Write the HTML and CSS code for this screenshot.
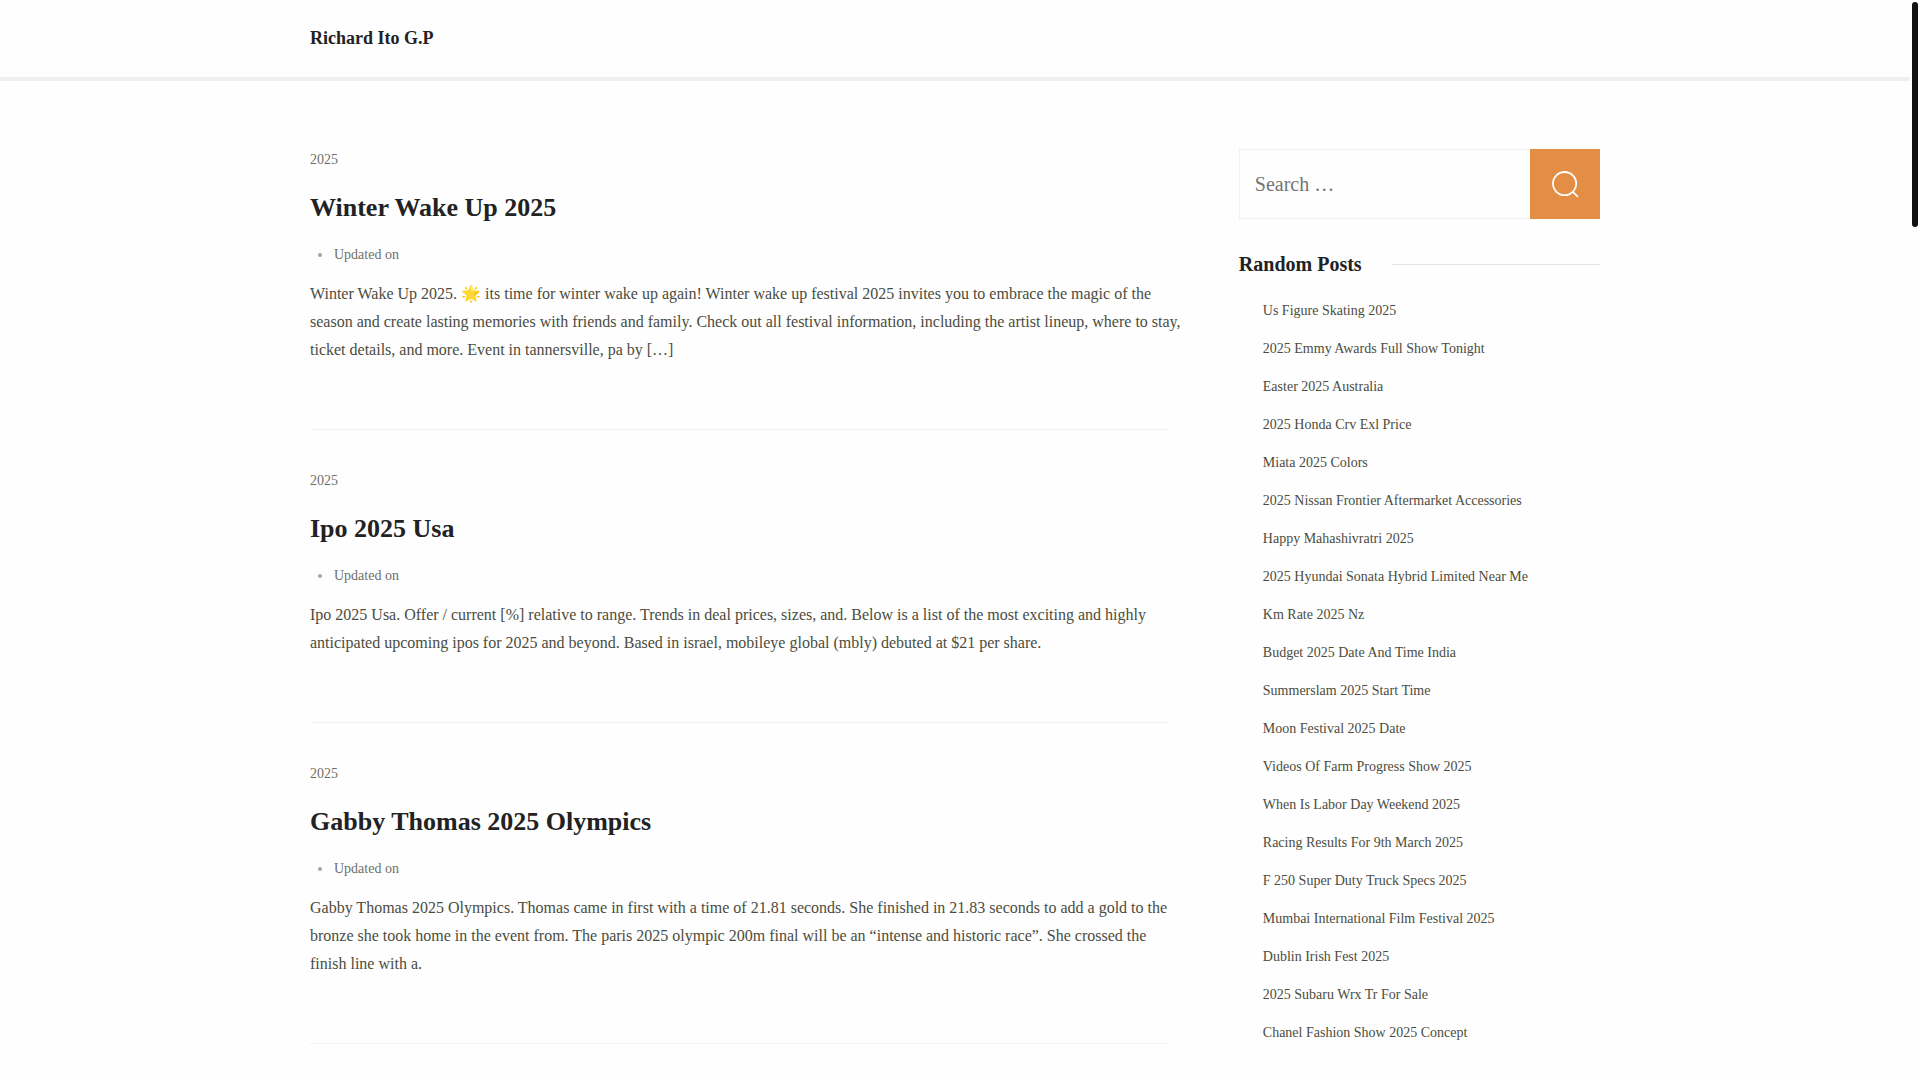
FILE: index.html
```html
<!DOCTYPE html>
<html lang="en">
<head>
<meta charset="utf-8">
<meta name="viewport" content="width=device-width, initial-scale=1">
<title>Richard Ito G.P</title>
<link rel="stylesheet" href="styles.css">
</head>
<body>
<header class="site-header">
  <div class="container">
    <a class="site-title" href="#">Richard Ito G.P</a>
  </div>
</header>
<div class="container content">
  <main class="posts">
    <article class="post">
      <a class="category" href="#">2025</a>
      <h2 class="post-title"><a href="#">Winter Wake Up 2025</a></h2>
      <ul class="meta"><li>Updated on</li></ul>
      <p class="excerpt">Winter Wake Up 2025. 🌟 its time for winter wake up again! Winter wake up festival 2025 invites you to embrace the magic of the season and create lasting memories with friends and family. Check out all festival information, including the artist lineup, where to stay, ticket details, and more. Event in tannersville, pa by […]</p>
    </article>
    <article class="post">
      <a class="category" href="#">2025</a>
      <h2 class="post-title"><a href="#">Ipo 2025 Usa</a></h2>
      <ul class="meta"><li>Updated on</li></ul>
      <p class="excerpt">Ipo 2025 Usa. Offer / current [%] relative to range. Trends in deal prices, sizes, and. Below is a list of the most exciting and highly anticipated upcoming ipos for 2025 and beyond. Based in israel, mobileye global (mbly) debuted at $21 per share.</p>
    </article>
    <article class="post">
      <a class="category" href="#">2025</a>
      <h2 class="post-title"><a href="#">Gabby Thomas 2025 Olympics</a></h2>
      <ul class="meta"><li>Updated on</li></ul>
      <p class="excerpt">Gabby Thomas 2025 Olympics. Thomas came in first with a time of 21.81 seconds. She finished in 21.83 seconds to add a gold to the bronze she took home in the event from. The paris 2025 olympic 200m final will be an “intense and historic race”. She crossed the finish line with a.</p>
    </article>
  </main>
  <aside class="sidebar">
    <form class="search" role="search">
      <input class="search-field" type="search" placeholder="Search …" aria-label="Search for">
      <button class="search-submit" type="submit" aria-label="Search">
        <svg class="search-icon" viewBox="0 0 28 28" aria-hidden="true"><circle cx="13.6" cy="13.6" r="11.6"/><path d="M21.4 21.4l5.4 5.4"/></svg>
      </button>
    </form>
    <section>
      <h2 class="widget-title">Random Posts</h2>
      <ul class="post-list">
        <li><a href="#">Us Figure Skating 2025</a></li>
        <li><a href="#">2025 Emmy Awards Full Show Tonight</a></li>
        <li><a href="#">Easter 2025 Australia</a></li>
        <li><a href="#">2025 Honda Crv Exl Price</a></li>
        <li><a href="#">Miata 2025 Colors</a></li>
        <li><a href="#">2025 Nissan Frontier Aftermarket Accessories</a></li>
        <li><a href="#">Happy Mahashivratri 2025</a></li>
        <li><a href="#">2025 Hyundai Sonata Hybrid Limited Near Me</a></li>
        <li><a href="#">Km Rate 2025 Nz</a></li>
        <li><a href="#">Budget 2025 Date And Time India</a></li>
        <li><a href="#">Summerslam 2025 Start Time</a></li>
        <li><a href="#">Moon Festival 2025 Date</a></li>
        <li><a href="#">Videos Of Farm Progress Show 2025</a></li>
        <li><a href="#">When Is Labor Day Weekend 2025</a></li>
        <li><a href="#">Racing Results For 9th March 2025</a></li>
        <li><a href="#">F 250 Super Duty Truck Specs 2025</a></li>
        <li><a href="#">Mumbai International Film Festival 2025</a></li>
        <li><a href="#">Dublin Irish Fest 2025</a></li>
        <li><a href="#">2025 Subaru Wrx Tr For Sale</a></li>
        <li><a href="#">Chanel Fashion Show 2025 Concept</a></li>
      </ul>
    </section>
  </aside>
</div>
<div class="scroll-thumb" aria-hidden="true"></div>
</body>
</html>
```
FILE: styles.css
```css
* { box-sizing: border-box; }

body {
  margin: 0;
  padding-right: 10px;
  background: #fefefe;
  color: #4b4c40;
  font-family: "Liberation Serif", "Times New Roman", serif;
  font-size: 16px;
  line-height: 28px;
}

a { color: inherit; text-decoration: none; }
h2, p, ul { margin: 0; padding: 0; }
ul { list-style: none; }

.container {
  width: 100%;
  max-width: 1290px;
  margin: 0 auto;
}

.site-header {
  padding: 24px 0 25px;
  border-bottom: 4px solid #f0f0f0;
}
.site-title {
  display: block;
  color: #222;
  font-size: 18px;
  font-weight: 700;
}

.content {
  display: grid;
  grid-template-columns: minmax(0, 1fr) 28%;
  column-gap: 70px;
  padding-top: 68px;
}

.post {
  padding-bottom: 65px;
  border-bottom: 1px solid #f2f2f2;
}
.post + .post { margin-top: 40px; }

.category {
  display: block;
  color: #6f7067;
  font-size: 14px;
  line-height: 22px;
}
.post-title {
  margin-top: 19px;
  color: #222;
  font-size: 26px;
  line-height: 36px;
}
.meta {
  margin: 19px 0 15px;
  color: #6f7067;
  font-size: 14px;
  line-height: 20px;
}
.meta li {
  display: flex;
  align-items: center;
  gap: 12px;
  padding-left: 8px;
}
.meta li::before {
  content: "";
  width: 4px;
  height: 4px;
  border-radius: 50%;
  background: #a5a6a0;
}
/* lets long lines run slightly into the column gap */
.excerpt { margin-right: -16px; }

.search { display: flex; height: 70px; }
.search-field {
  flex: 1;
  min-width: 0;
  padding: 0 15px;
  border: 1px solid #f0f0f0;
  border-right: 0;
  border-radius: 0;
  background: transparent;
  color: #4b4c40;
  font: inherit;
  font-size: 20px;
  appearance: none;
}
.search-field::placeholder { color: #757575; }
.search-submit {
  display: grid;
  place-items: center;
  width: 70px;
  padding: 0;
  border: 0;
  background: #e48d45;
}
.search-icon {
  width: 28px;
  height: 28px;
  fill: none;
  stroke: #fff;
  stroke-width: 1.8;
}

.widget-title {
  display: flex;
  align-items: center;
  gap: 30px;
  margin: 33px 0 25px;
  color: #222;
  font-size: 20px;
  line-height: 24px;
}
.widget-title::after {
  content: "";
  flex: 1;
  height: 1px;
  background: #e6e6e6;
}
.post-list {
  display: grid;
  gap: 18px;
  padding-left: 24px;
  font-size: 14px;
  line-height: 20px;
}
.post-list a { display: block; }

.scroll-thumb {
  position: fixed;
  top: 2px;
  right: 2px;
  width: 6px;
  height: 225px;
  border-radius: 3px;
  background: #111;
}
```
